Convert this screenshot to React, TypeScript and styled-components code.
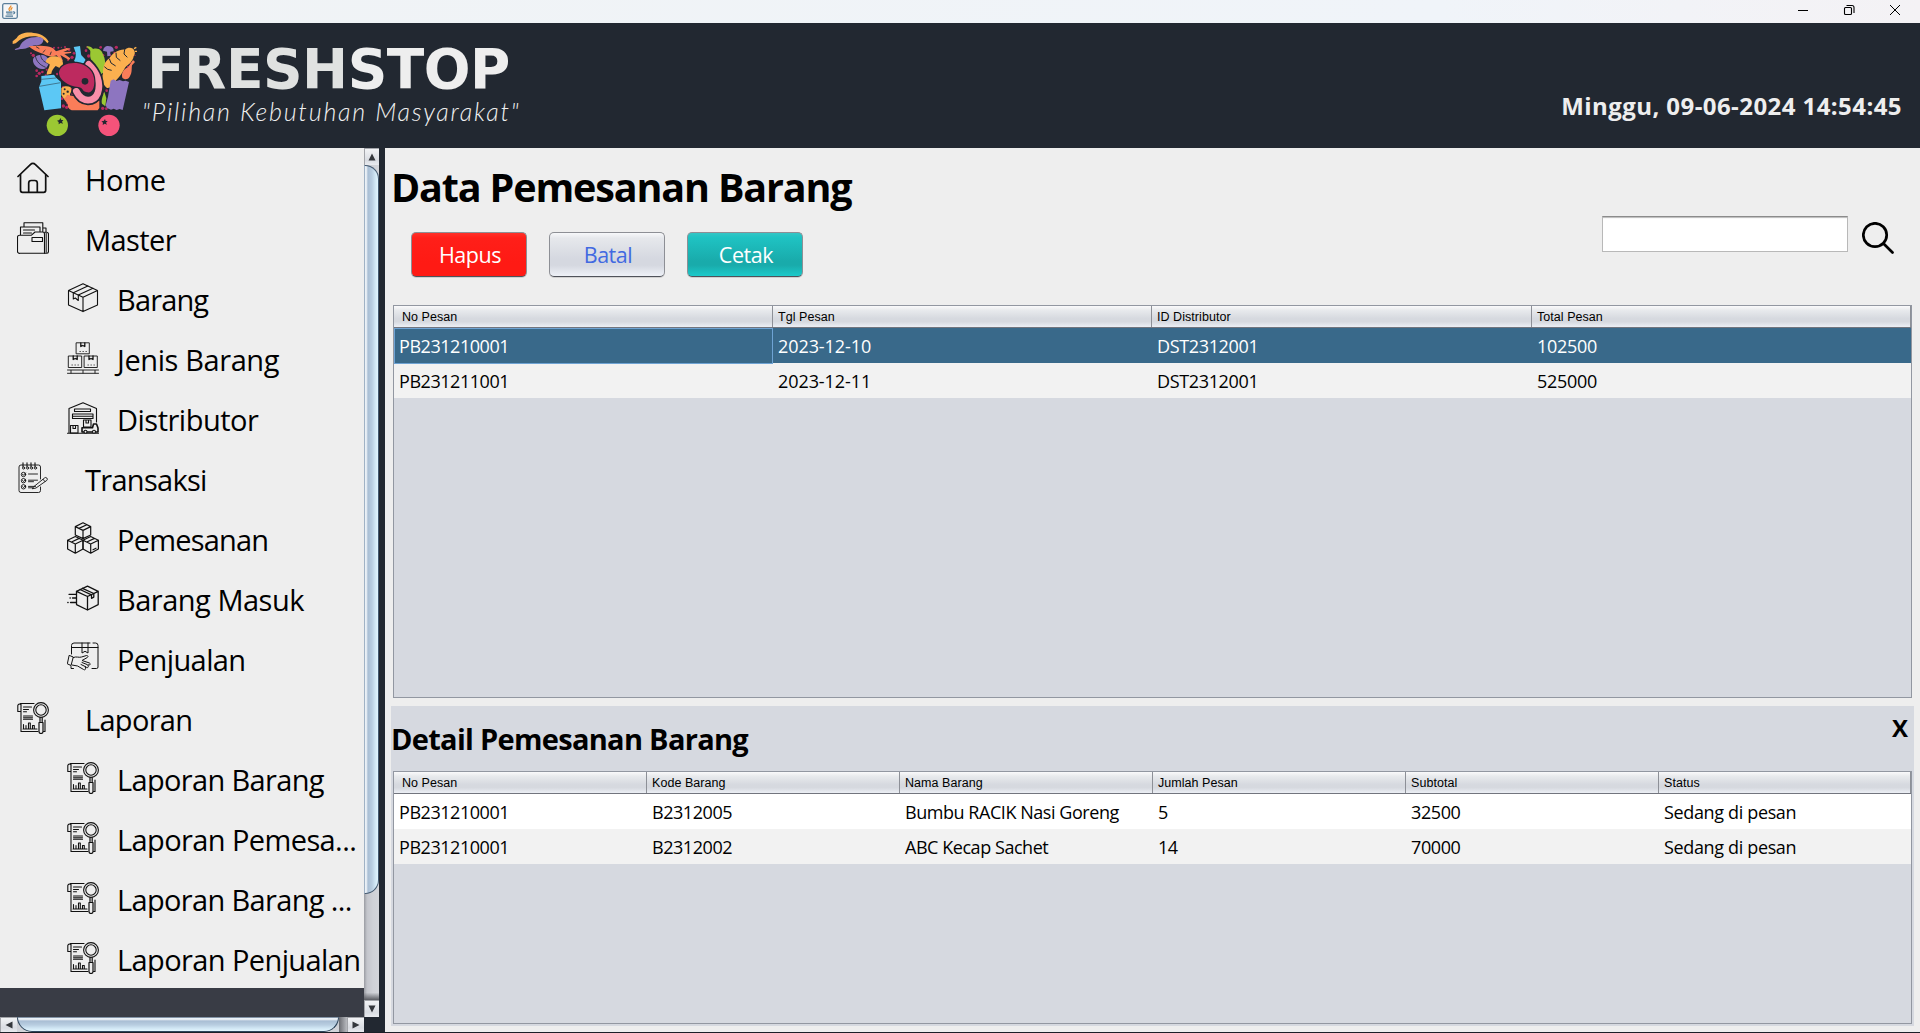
import React from "react";
import styled, { createGlobalStyle, css } from "styled-components";

const ui = `"Open Sans", "Noto Sans", sans-serif`;

const GlobalStyle = createGlobalStyle`
  * { box-sizing: border-box; }
  body { margin: 0; background: #222831; overflow: hidden; font-family: ${ui}; }
`;

/* ---------- window frame ---------- */

const Window = styled.div`
  width: 1920px;
  height: 1033px;
  display: flex;
  flex-direction: column;
  border-bottom: 1px solid #1b1f27;
  background: #222831;
`;

const TitleBar = styled.div`
  height: 23px;
  flex: none;
  display: flex;
  justify-content: space-between;
  padding: 3px 19px 0 2px;
  background: linear-gradient(90deg, #f0f3f5 0%, #f0f4f9 75%, #f4f2f5 100%);
`;

const WindowControls = styled.div`
  display: flex;
  gap: 34px;
  padding-top: 1px;
`;

/* ---------- header ---------- */

const Header = styled.header`
  height: 125px;
  flex: none;
  display: flex;
  justify-content: space-between;
  padding: 7px 18px 0 10px;
  background: #222831;
`;

const Brand = styled.div`
  display: flex;
`;

const BrandText = styled.div`
  display: flex;
  flex-direction: column;
  padding: 7px 0 0 1px;
`;

const BrandName = styled.div`
  padding-left: 5px;
  font: 700 55px/64px "DejaVu Sans", sans-serif;
  letter-spacing: -0.5px;
  color: #eeeeee;
  white-space: nowrap;
`;

const BrandAccent = styled.span`
  color: #e0e2e1;
`;

const Tagline = styled.div`
  margin-top: -7px;
  font: italic 300 25px/34px "Lato", sans-serif;
  letter-spacing: 1.8px;
  color: #f0f0f0;
  white-space: nowrap;
`;

const Clock = styled.div`
  padding-top: 59px;
  font-size: 24px;
  line-height: 34px;
  font-weight: 700;
  letter-spacing: 0.43px;
  color: #eeeeee;
  white-space: nowrap;
`;

/* ---------- body ---------- */

const Body = styled.div`
  flex: 1;
  min-height: 0;
  display: flex;
`;

const SidePane = styled.aside`
  width: 385px;
  flex: none;
  display: grid;
  grid-template-columns: 364px 15px;
  grid-template-rows: 1fr 15px;
`;

const MenuViewport = styled.div`
  background: #393c45;
  overflow: hidden;
`;

const MenuItem = styled.div<{ $sub?: boolean }>`
  height: 60px;
  display: flex;
  align-items: center;
  gap: ${(p) => (p.$sub ? 18 : 36)}px;
  padding-left: ${(p) => (p.$sub ? 67 : 17)}px;
  background: #eeeeee;

  svg {
    flex: none;
  }
`;

const MenuLabel = styled.span<{ $track?: number }>`
  padding-top: 4px;
  font-size: 29px;
  line-height: 40px;
  letter-spacing: ${(p) => p.$track ?? 0}px;
  color: #000;
  white-space: nowrap;
`;

/* ---------- scroll bars ---------- */

const VScroll = styled.div`
  display: flex;
  flex-direction: column;
  background: linear-gradient(90deg, #9a9ca2 0, #c3c5cb 3px, #cfd1d7 9px, #d3d5da 100%);
`;

const HScroll = styled.div`
  display: flex;
  background: linear-gradient(180deg, #8d8f95 0, #c3c5cb 3px, #cfd1d7 9px, #d3d5da 100%);
`;

const VThumb = styled.div`
  height: 729px;
  border: 1px solid #42586f;
  border-left-color: #a0b2c5;
  border-radius: 0 14px 14px 0;
  background: linear-gradient(90deg, #dfe8f0 0, #f6f9fc 1px, #a9bed4 3px, #b9cee1 7px, #cfe5f3 10px, #e2f6ff 13px);
`;

const HThumb = styled.div`
  width: 322px;
  border: 1px solid #2f465c;
  border-top-color: #8394a7;
  border-radius: 0 0 15px 15px;
  background: linear-gradient(180deg, #dfe8f0 0, #f6f9fc 1px, #a9bed4 3px, #b9cee1 7px, #cfe5f3 10px, #e2f6ff 13px);
`;

const ScrollGap = styled.div<{ $vertical?: boolean }>`
  flex: 1;
  background: ${(p) =>
    p.$vertical
      ? "linear-gradient(180deg, transparent 93%, #5a5c62 100%)"
      : "linear-gradient(90deg, #6b6d73 0, #b9bbc0 100%)"};
`;

const ArrowButton = styled.div<{ $vertical?: boolean }>`
  flex: none;
  display: flex;
  align-items: center;
  justify-content: center;
  width: ${(p) => (p.$vertical ? 15 : 17)}px;
  height: ${(p) => (p.$vertical ? 17 : 15)}px;
  border-left: 1px solid #a3a5aa;
  border-top: 1px solid #a3a5aa;
  background: linear-gradient(180deg, #f2f3f5, #d9dce2 70%, #e9ebef);
`;

/* ---------- content ---------- */

const Content = styled.main`
  flex: 1;
  display: flex;
  flex-direction: column;
  padding: 0 6px 6px;
  background: #eeeeee;
`;

const PageTitle = styled.h1`
  margin: 12px 0 0 0;
  font-size: 39.5px;
  line-height: 54px;
  height: 53px;
  letter-spacing: -1.15px;
  white-space: nowrap;
`;

const Toolbar = styled.div`
  height: 92px;
  display: flex;
  align-items: flex-start;
  justify-content: space-between;
  padding: 3px 20px 0 20px;
`;

const ButtonRow = styled.div`
  display: flex;
  gap: 22px;
  padding-top: 16px;
`;

const tones = {
  danger: css`
    background: linear-gradient(180deg, #ff3028 0, #ff1f19 12%, #ff1a14 70%, #ff1a14 100%);
    color: #fff;
  `,
  plain: css`
    background: linear-gradient(180deg, #f7f8fa 0, #e6e8ec 12%, #d5d8e0 60%, #d5d8e0 75%, #eef1f7 100%);
    color: #4169e1;
  `,
  teal: css`
    background: linear-gradient(180deg, #33c6c6 0, #1fc3c3 10%, #19abab 65%, #19abab 75%, #1ccaca 100%);
    color: #fff;
  `,
};

const ActionButton = styled.button<{ $tone: keyof typeof tones }>`
  width: 116px;
  height: 45px;
  padding: 0 0 0 2px;
  border: 1px solid #8d8f95;
  border-bottom-color: #4f525a;
  border-radius: 5px;
  box-shadow: 0 1px 0 rgba(0, 0, 0, 0.12);
  font: 400 21.5px/30px ${ui};
  letter-spacing: -0.45px;
  ${(p) => tones[p.$tone]}
`;

const SearchBox = styled.div`
  display: flex;
  gap: 14px;
`;

const SearchInput = styled.input`
  width: 246px;
  height: 36px;
  border: 1px solid #b8b8b8;
  border-top: 1px solid #8b8b8b;
  background: #fff;
  box-shadow: inset 0 2px 1px -1px #bbb;
  outline: none;
`;

const SearchIconSlot = styled.div`
  padding-top: 6px;
`;

/* ---------- tables ---------- */

const Grid = styled.div<{ $height: number }>`
  height: ${(p) => p.$height}px;
  margin: 0 2px;
  border: 1px solid #9297a1;
  background: #d6d9e0;
`;

const GridRow = styled.div<{ $template: string; $bg?: string; $fg?: string }>`
  display: grid;
  grid-template-columns: ${(p) => p.$template};
  height: 35px;
  background: ${(p) => p.$bg ?? "#fff"};
  color: ${(p) => p.$fg ?? "#000"};
`;

const GridHead = styled(GridRow)`
  height: 22px;
  border-bottom: 1px solid #72757e;
  background: linear-gradient(180deg, #fafafb 0, #e8eaed 20%, #d6d9df 60%, #d6d9df 75%, #eceff5 100%);
`;

const HeadCell = styled.div`
  padding: 1px 0 0 5px;
  border-right: 1px solid #8d9097;
  font: 400 12.5px/20px "Liberation Sans", Arial, sans-serif;
  letter-spacing: 0.05px;
  white-space: nowrap;
  &:first-child {
    padding-left: 8px;
  }
`;

const Cell = styled.div<{ $focus?: boolean; $track?: number }>`
  padding: 1px 0 0 5px;
  font-size: 18px;
  line-height: 35px;
  letter-spacing: ${(p) => p.$track ?? -0.45}px;
  white-space: nowrap;
  ${(p) =>
    p.$focus &&
    css`
      padding: 0 0 0 4px;
      line-height: 34px;
      border: 1px solid #6ea3d4;
    `}
`;

const DetailPanel = styled.section`
  margin-top: 8px;
  height: 320px;
  background: #d6d9e0;
`;

const DetailHead = styled.div`
  height: 65px;
  display: flex;
  justify-content: space-between;
  padding: 0 6px 0 0;
`;

const DetailTitle = styled.h2`
  margin: 13px 0 0 0;
  font-size: 29px;
  line-height: 40px;
  letter-spacing: -0.7px;
  white-space: nowrap;
`;

const CloseMark = styled.div`
  padding-top: 5px;
  font-size: 24px;
  font-weight: 700;
  line-height: 34px;
`;

/* ---------- icons ---------- */

const Line = ({ w = 1, children }: { w?: number; children: React.ReactNode }) => (
  <svg width="32" height="32" viewBox="0 0 32 32" fill="none" stroke="#111" strokeWidth={w} strokeLinejoin="round" strokeLinecap="round">
    {children}
  </svg>
);

const HomeIcon = () => (
  <Line w={1.7}>
    <path d="M1 14.5 13.6 2.3a3.2 3.2 0 0 1 4.6 0L31 14.5" />
    <path d="M3.5 12.6V28.3a2 2 0 0 0 2 2H26.7a2 2 0 0 0 2-2V12.6" />
    <path d="M11.7 30V21a2.5 2.5 0 0 1 2.5-2.5h3.6A2.5 2.5 0 0 1 20.3 21v9" />
  </Line>
);

const FolderIcon = () => (
  <Line w={1.1}>
    <path d="M7 4.5V.8H25.8V9.5M3.5 12.5V5H23V9.5M29 10V6h-3M6.5 8h11M6.5 11h8" />
    <path d="M3 31.3H27.5V12a2 2 0 0 0-2-2H18l-3.500 3.200H2.500a2 2 0 0 0-2 2V29.300a2 2 0 0 0 2.500 2Z" />
    <path d="M27.5 10.2h2a2 2 0 0 1 2 2V29.500a2 2 0 0 1-2 1.800h-2" />
    <path d="M15 15.5h10.5v4H15Z" />
    <path d="M29.3 11v19.5" strokeWidth="1.5" stroke="#555" />
  </Line>
);

const BoxIcon = () => (
  <Line w={1.1}>
    <path d="M16 1.8 30.5 8.5V23L16 29.6 1.5 23V8.5ZM1.5 8.5 16 15.2 30.5 8.5M16 15.2V29.6" />
    <path d="M6.3 10.7 20.8 3.9M11.300 13 26 6.3M6.3 10.7v6.300l2-1 3 2.500V13" />
  </Line>
);

const StackIcon = () => (
  <Line w={0.9}>
    <path d="M9.5 .8h12.800v11H9.500ZM1.700 14h13v11.500h-13ZM17.500 14h12.800v11.500H17.500Z" />
    <path d="M13.800 1v3.500l2-1 2 1V1M6.200 14v3.500l2-1 2 1V14M22 14v3.500l2-1 2 1V14" strokeWidth="1.3" />
    <path d="M13 9.500h.3M16 9.500h.3M19 9.500h.3M5 23h.3M8 23h.3M11 23h.3M21 23h.3M24 23h.3M27 23h.3" />
    <path d="M.5 28h31M.5 31.300h31M4 28.500v2.500M16 28.500v2.500M28 28.500v2.500" />
  </Line>
);

const WarehouseIcon = () => (
  <Line w={1.1}>
    <path d="M.5 31.200H31.500M2 31V6.500L16 .8 29.500 6.500V20" />
    <path d="M7.500 7h16v2.500h-16ZM5.500 12H26M5.500 14.200H26M5.500 16.500H26M5.500 12v4.500M26 12v4.500" />
    <path d="M3.500 23.500h7.500v7.500H3.500ZM6 23.500v3h2.500v-3M16.500 18h7.500v7H16.500ZM19 18v3h2.500v-3" />
    <path d="M15 25.800h10.500l1-3.800h3l1.500 4v4H15Z" strokeWidth="1.6" />
    <circle cx="18.5" cy="29.8" r="1.5" fill="#eee" />
    <circle cx="27" cy="29.8" r="1.5" fill="#eee" />
  </Line>
);

const NotesIcon = () => (
  <Line w={0.9}>
    <path d="M23.500 17V5a2 2 0 0 0-2-2H4a2 2 0 0 0-2 2v23.500a2 2 0 0 0 2 2H21.500a2 2 0 0 0 2-2V25" />
    <path d="M6 .8v4M10 .8v4M14 .8v4M18 .8v4" strokeWidth="1.1" />
    <circle cx="6.6" cy="6" r="1.1" /><circle cx="10.6" cy="6" r="1.1" /><circle cx="14.6" cy="6" r="1.1" /><circle cx="18.5" cy="6" r="1.1" />
    <circle cx="6.5" cy="12.5" r="2.2" /><circle cx="6.5" cy="18.7" r="2.2" /><circle cx="6.5" cy="24.8" r="2.2" />
    <path d="M5.500 12.300l1 1 2-2.300M5.500 18.500l1 1 2-2.300M5.500 24.600l1 1 2-2.300M11.500 12h9M11.500 18.200h9M11.500 19.700h5M11.500 24.400h7M11.500 25.800h4" strokeWidth=".9" />
    <path d="M17 24.500 27.500 16a1.600 1.600 0 0 1 2.300 2.400L19 26l-3.300.7ZM26 17.300l2 2.300" />
  </Line>
);

const CubesIcon = () => (
  <Line w={1.2}>
    <path d="M16 .8 23.700 4.600V13L16 16.600 8.300 13V4.600ZM8.300 4.600 16 8.400 23.700 4.600M16 8.400v8.200M12 6.400l7.800-3.700" />
    <path d="M8.300 14.500 16 18.200V27L8.300 31.200.6 27V18.200ZM.6 18.200l7.700 3.800L16 18.200M8.300 22v9M4.500 20l7.700-3.600" />
    <path d="M23.700 14.500 31.400 18.200V27L23.700 31.200 16 27V18.200ZM16 18.200l7.700 3.800 7.700-3.800M23.700 22v9M19.800 20l7.700-3.600M26 27.700l3-1.500" />
  </Line>
);

const IncomingIcon = () => (
  <Line w={1.3}>
    <path d="M20.500 4.200 31.200 9.300V22.600L20.500 28 9.500 22.600V9.300ZM9.500 9.300l11 5.200 10.700-5.200M20.500 14.500V28" />
    <path d="M13 7.500 24.500 12.800v3.500l2.300-1.200V11.500L15.500 6.300" />
    <path d="M2 12.300h7M3 16h.3M5.500 16H9M.8 20.500h.3M3.500 20.500H9" />
  </Line>
);

const HandoverIcon = () => (
  <Line w={1}>
    <path d="M4.500 12V3.500a2.500 2.500 0 0 1 2.500-2.500H23M26 1h2.500a2.500 2.500 0 0 1 2.500 2.500V25a1.500 1.500 0 0 1-1.500 1.500H25M4.500 5.500H31M15 1v10l3-1.700 3 1.700V1M4 24.500v2h2.500" />
    <path d="M2.500 13.500 6.300 15 4 23.500 .7 22ZM6.300 15.500c3-1.500 6 .5 8.200-.5l5-1.500c1.500-.2 2 1.300.8 2l-5.300 3 7.500 2.500c1.200.6.8 2-.3 2l-1.500-.2.600 1.500c.2 1-.7 1.600-1.500 1.200l-1.500-.8.3 2c0 1-1.200 1.500-2 .8l-6-3.500L5 23" />
    <path d="M15 20.500l5 2M14 22.500l4.500 2.200" />
  </Line>
);

const ReportIcon = () => (
  <Line w={1.1}>
    <path d="M17 1.500H3.500M4 1.500V29.500H21M28 18v11.500h-1.500M4 9.500H.8V3.500A2 2 0 0 1 4 2.500" />
    <path d="M6.500 5h8M6.500 7.500h5M6.500 9.700h3M6.500 14h9M6.500 15.700h9M6.500 17.300h9" />
    <path d="M6.500 27V22.500M9 27v-3.500M11.500 27V21h1.800v6M15.500 27V23.500h1.800V27M6 27H20" />
    <circle cx="24" cy="8" r="7.4" /><circle cx="24" cy="8" r="5.2" />
    <path d="M23 15.500v4M25.200 15.500v4M22 20.500h4v9a2 2 0 0 1-4 0Z" strokeWidth="1.2" />
  </Line>
);

const SearchIcon = () => (
  <svg width="32" height="32" viewBox="0 0 32 32" fill="none" stroke="#000" strokeWidth="2.7" strokeLinecap="round">
    <circle cx="13" cy="13" r="11.7" />
    <path d="M21.7 21.7 30.5 30.5" />
  </svg>
);

const JavaIcon = () => (
  <svg width="16" height="16" viewBox="0 0 16 16" fill="none">
    <rect x=".7" y=".7" width="14.6" height="14.6" rx="1.5" fill="#f5f6f7" stroke="#5b7f9b" strokeWidth="1.3" />
    <path d="M8.800 2.500c1 1.500-2.500 2.500-1.800 4 .3.700.8 1 .5 1.800M10.500 4.500c-2 1-1.800 1.800-1.300 3" stroke="#ea8a24" strokeWidth="1.2" />
    <path d="M4 9.200h6.500M4.500 11h6M3.500 13.200h7.500M11 9c2-.6 2.500 1.200.3 2" stroke="#4e7896" strokeWidth="1.2" />
  </svg>
);

const Arrow = ({ d }: { d: string }) => (
  <svg width="8" height="8" viewBox="0 0 8 8">
    <path d={d} fill="#34373c" />
  </svg>
);

const berries = [
  [175, 143, 3], [184, 142, 2], [195, 141, 3], [207, 149, 4], [93, 160, 3], [100, 166, 5], [162, 143, 3], [222, 160, 4],
  [216, 172, 5], [228, 190, 4], [204, 180, 3], [258, 152, 4], [266, 168, 5], [262, 142, 3], [302, 142, 4], [309, 166, 4],
  [349, 142, 5], [343, 158, 3], [110, 212, 4], [118, 220, 5], [110, 228, 4], [127, 216, 4], [137, 226, 3], [140, 209, 3],
  [190, 262, 4], [186, 296, 4], [190, 318, 5], [200, 322, 5], [213, 268, 4], [320, 272, 4], [308, 280, 3], [308, 325, 5],
  [319, 326, 4], [388, 186, 5], [384, 200, 3], [405, 166, 2], [217, 282, 3], [172, 222, 4], [202, 310, 3], [330, 165, 3],
];

const CartLogo = () => (
  <svg width="131" height="110" viewBox="30 90 393 330" fill="none">
    {berries.map(([x, y, r], i) => (
      <circle key={i} cx={x} cy={y} r={r} fill="#b8285f" />
    ))}
    <path d="M38 124 50 114C60 97 85 96 101 99c20 1 36 10 45 26l-4 5c-8-10-16-17-28-20-20-4-42 2-55 10l-12 10-9 2Z" fill="#fbb04f" />
    <path d="M44 149c3-5 11-4 15-9 8-20 28-29 52-29 14 0 20 4 19 10-1 12-15 16-24 15-14 1-24 12-42 11-8-1-14 5-20 2Z" fill="#8d75c0" />
    <path d="M86 139c20-3 45-2 62 1 10 2 16 8 20 14l32-10 12 2-22 10 24-1-1 4-20 3 18 13-4 5-26-15 8 18-7-2-12-15c-12 5-26 4-38-3-20-7-36-14-46-24Z" fill="#fa7d59" />
    <path d="m108 140 10 6M128 158l8-8M150 165l4-10" stroke="#222831" strokeWidth="2.5" />
    <path d="M99 180c1-12 15-16 28-15 14 2 20 12 19 23-2 13-10 20-20 19-16-1-28-15-27-27Z" fill="#8d75c0" />
    <path d="M106 167c3 18 14 28 31 35M122 165c1 12 8 20 22 25" stroke="#222831" strokeWidth="2.5" />
    <path d="M137 186c2-12 14-18 28-17 15 1 25 12 24 24-1 9-4 12-10 11l-12-6c-5 6-12 12-13 23l-14 3c0-13 9-20 9-31Z" fill="#fbb04f" />
    <path d="m221 141 19-3 3 24c0 7 16 13 15 23l-20 10-16-12c5-9 6-16 5-25Z" fill="#5cc8f5" />
    <path d="M259 139c8-2 17 2 20 8 17-5 27 4 31 19 9 17 4 32 2 50l-8 6c-9-15-25-30-31-43-5-15 0-22-3-28Z" fill="#9bc833" />
    <path d="M309 152c2-12 11-16 18-13 9 0 15 5 14 15l-10 1v12l-9 2-1-14Z" fill="#8d75c0" />
    <path d="M389 143c14 0 20 15 12 26-2 14-15 24-25 33-8 15-16 28-27 38-8 15-17 25-28 24-12-8-17-26-12-44 0-18 5-37 19-45 10-16 30-28 47-26 4-5 9-6 14-6Z" fill="#fbb04f" />
    <path d="m374 148-2 14 10 10M348 158l1 14 12 10M328 176l5 13 14 9M313 200l10 8 12 3" stroke="#222831" strokeWidth="3" />
    <path d="m402 146 7-4M405 154l6 0" stroke="#fbb04f" strokeWidth="4" />
    <path d="m399 180 6 6-9 10c-2 12 1 22-7 34-6 10-16 9-22 3-4-13 4-26 17-31Z" fill="#fa7d59" />
    <path d="m124 228 38-4 7 10 14 12V325l-50 6L117 262l7-18Z" fill="#5cc8f5" />
    <path d="m124 238 44-4M118 259l64-11" stroke="#222831" strokeWidth="1.5" />
    <path d="M184 264c8-7 20-7 28-2l2 12-4 8v12l-18 3-8-12Z" fill="#fbb04f" />
    <g fill="#222831">
      <circle cx="194" cy="268" r="3" /><circle cx="203" cy="275" r="3.5" /><circle cx="191" cy="281" r="3" /><circle cx="203" cy="288" r="2.5" />
    </g>
    <path d="M192 298 202 285l22 4c14 30 40 25 74 13v22l-5 7H215c-9-4-12-9-12-19Z" fill="#fa7d59" />
    <path d="m313 275 6 20-3 24-10-8c-3-12 3-25 7-36Z" fill="#9bc833" />
    <path d="m332 242 9-4 8 5 10-3 10 4 8-2 10 4-19 84-9-3-9 3-9-4-8 3-12-5-4-8 7-26Z" fill="#8d75c0" />
    <path d="M266 191C290 215 306 250 294 282c-11 26-48 30-66-8" stroke="#222831" strokeWidth="28" strokeLinecap="round" />
    <path d="M266 193C290 215 304 250 293 280c-11 26-46 30-64-6" stroke="#f88ea9" strokeWidth="20" strokeLinecap="round" />
    <path d="M177 216c4-21 27-29 53-27 31 4 53 25 53 55 0 22-7 36-22 33-16-3-10-14-26-16-29-2-60-22-58-45Z" fill="#bd2a5f" stroke="#222831" strokeWidth="7" paintOrder="stroke" />
    <circle cx="255" cy="244" r="10" fill="#222831" />
    <circle cx="172" cy="376" r="32" fill="#9bc833" />
    <circle cx="327" cy="376" r="32" fill="#f5537a" />
    <path d="m181 354 3 6 6 0-4 5 3 6-7-2-6 4 0-7-5-4 7-2Z" fill="#222831" />
    <path d="m315 357 2 6 6 0-5 5 3 6-7-3-6 4 1-7-5-4 7-1Z" fill="#222831" />
  </svg>
);

/* ---------- data ---------- */

const menu: { label: string; icon: React.FC; sub?: boolean; track?: number }[] = [
  { label: "Home", icon: HomeIcon, track: -0.3 },
  { label: "Master", icon: FolderIcon, track: -0.6 },
  { label: "Barang", icon: BoxIcon, sub: true, track: -0.85 },
  { label: "Jenis Barang", icon: StackIcon, sub: true, track: -0.4 },
  { label: "Distributor", icon: WarehouseIcon, sub: true, track: -0.5 },
  { label: "Transaksi", icon: NotesIcon, track: -0.7 },
  { label: "Pemesanan", icon: CubesIcon, sub: true, track: -0.8 },
  { label: "Barang Masuk", icon: IncomingIcon, sub: true, track: -0.5 },
  { label: "Penjualan", icon: HandoverIcon, sub: true, track: -0.6 },
  { label: "Laporan", icon: ReportIcon, track: -0.7 },
  { label: "Laporan Barang", icon: ReportIcon, sub: true, track: -0.65 },
  { label: "Laporan Pemesa...", icon: ReportIcon, sub: true, track: -0.6 },
  { label: "Laporan Barang ...", icon: ReportIcon, sub: true, track: -0.65 },
  { label: "Laporan Penjualan", icon: ReportIcon, sub: true, track: -0.6 },
];

type Column = { name: string; track?: number };

const orderColumns: Column[] = [
  { name: "No Pesan" },
  { name: "Tgl Pesan", track: -0.08 },
  { name: "ID Distributor", track: -0.35 },
  { name: "Total Pesan", track: -0.3 },
];
const orders = [
  ["PB231210001", "2023-12-10", "DST2312001", "102500"],
  ["PB231211001", "2023-12-11", "DST2312001", "525000"],
];

const detailColumns: Column[] = [
  { name: "No Pesan" },
  { name: "Kode Barang" },
  { name: "Nama Barang" },
  { name: "Jumlah Pesan" },
  { name: "Subtotal", track: -0.4 },
  { name: "Status", track: -0.35 },
];
const details = [
  ["PB231210001", "B2312005", "Bumbu RACIK Nasi Goreng", "5", "32500", "Sedang di pesan"],
  ["PB231210001", "B2312002", "ABC Kecap Sachet", "14", "70000", "Sedang di pesan"],
];

type TableProps = { columns: Column[]; template: string; rows: string[][]; height: number; selected?: number };

const DataTable = ({ columns, template, rows, height, selected }: TableProps) => (
  <Grid $height={height}>
    <GridHead $template={template}>
      {columns.map((c) => (
        <HeadCell key={c.name}>{c.name}</HeadCell>
      ))}
    </GridHead>
    {rows.map((row, r) => (
      <GridRow
        key={r}
        $template={template}
        $bg={r === selected ? "#39698a" : r % 2 ? "#f2f2f2" : "#fff"}
        $fg={r === selected ? "#fff" : "#000"}
      >
        {row.map((value, c) => (
          <Cell key={c} $focus={r === selected && c === 0} $track={columns[c].track}>
            {value}
          </Cell>
        ))}
      </GridRow>
    ))}
  </Grid>
);

export default function App() {
  return (
    <Window>
      <GlobalStyle />
      <TitleBar>
        <JavaIcon />
        <WindowControls>
          <svg width="12" height="12" viewBox="0 0 12 12"><path d="M1 6.5h10" stroke="#000" /></svg>
          <svg width="12" height="12" viewBox="0 0 12 12" fill="none" stroke="#000" strokeWidth="1.1">
            <rect x="1.5" y="3.5" width="7" height="7" rx="1" />
            <path d="M3.5 1.5h5.500a2 2 0 0 1 2 2V9" />
          </svg>
          <svg width="12" height="12" viewBox="0 0 12 12"><path d="m1 1 10 10M11 1 1 11" stroke="#000" /></svg>
        </WindowControls>
      </TitleBar>
      <Header>
        <Brand>
          <CartLogo />
          <BrandText>
            <BrandName>
              <BrandAccent>FRESH</BrandAccent>STOP
            </BrandName>
            <Tagline>"Pilihan Kebutuhan Masyarakat"</Tagline>
          </BrandText>
        </Brand>
        <Clock>Minggu, 09-06-2024 14:54:45</Clock>
      </Header>
      <Body>
        <SidePane>
          <MenuViewport>
            {menu.map(({ label, icon: Icon, sub, track }) => (
              <MenuItem key={label} $sub={sub}>
                <Icon />
                <MenuLabel $track={track}>{label}</MenuLabel>
              </MenuItem>
            ))}
          </MenuViewport>
          <VScroll>
            <ArrowButton $vertical><Arrow d="M4 .5 7.5 7.5H.5Z" /></ArrowButton>
            <VThumb />
            <ScrollGap $vertical />
            <ArrowButton $vertical><Arrow d="M4 7.5 7.5 .5H.5Z" /></ArrowButton>
          </VScroll>
          <HScroll>
            <ArrowButton><Arrow d="M.5 4 7.5 .5v7Z" /></ArrowButton>
            <HThumb />
            <ScrollGap />
            <ArrowButton><Arrow d="M7.5 4 .5 .5v7Z" /></ArrowButton>
          </HScroll>
        </SidePane>
        <Content>
          <PageTitle>Data Pemesanan Barang</PageTitle>
          <Toolbar>
            <ButtonRow>
              <ActionButton $tone="danger">Hapus</ActionButton>
              <ActionButton $tone="plain">Batal</ActionButton>
              <ActionButton $tone="teal">Cetak</ActionButton>
            </ButtonRow>
            <SearchBox>
              <SearchInput />
              <SearchIconSlot><SearchIcon /></SearchIconSlot>
            </SearchBox>
          </Toolbar>
          <DataTable columns={orderColumns} template="379px 379px 380px 1fr" rows={orders} height={393} selected={0} />
          <DetailPanel>
            <DetailHead>
              <DetailTitle>Detail Pemesanan Barang</DetailTitle>
              <CloseMark>X</CloseMark>
            </DetailHead>
            <DataTable columns={detailColumns} template="repeat(5, 253px) 1fr" rows={details} height={253} />
          </DetailPanel>
        </Content>
      </Body>
    </Window>
  );
}
